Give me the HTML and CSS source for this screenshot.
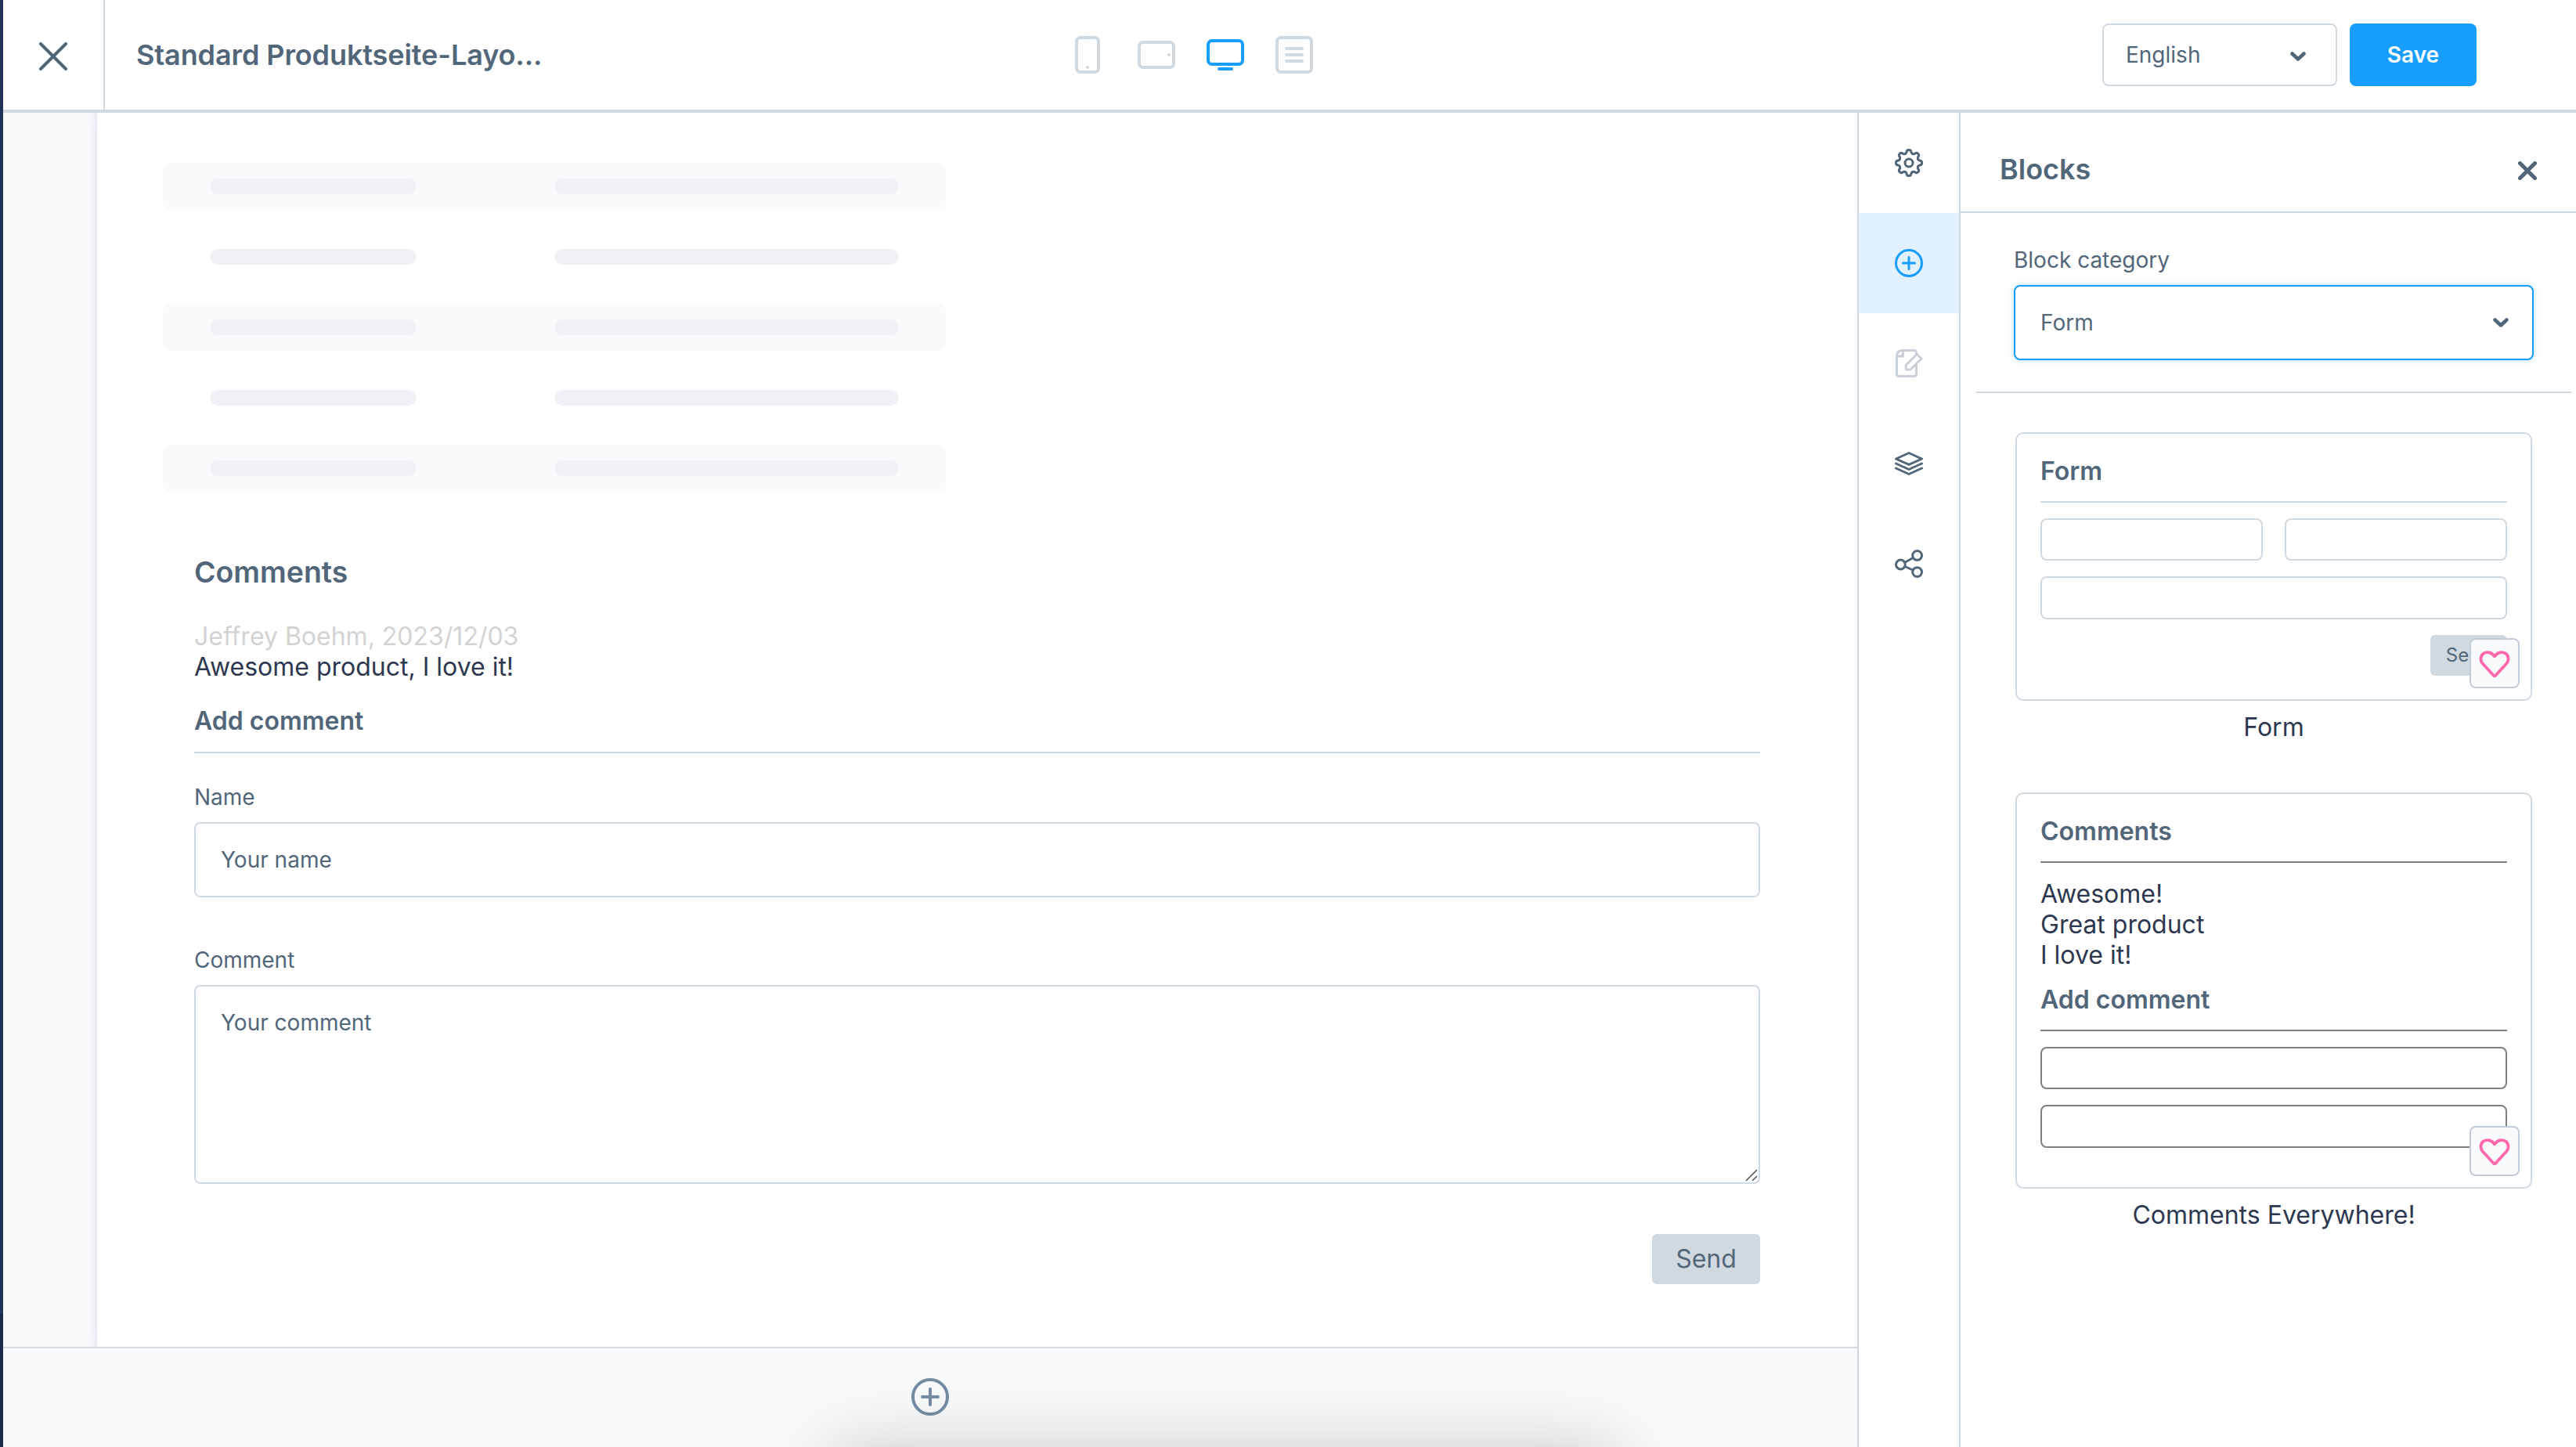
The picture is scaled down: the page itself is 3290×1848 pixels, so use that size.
FILE: index.html
```html
<!DOCTYPE html>
<html lang="en">
<head>
    <meta charset="UTF-8">
    <meta name="viewport" content="width=device-width, initial-scale=1.0">
    <title>Standard Produktseite-Layout</title>
    <link rel="stylesheet" href="styles.css">
</head>
<body>
    <div class="app">
        <div class="app-edge"></div>

        <div class="page">
            <header class="toolbar">
                <button class="toolbar-close" aria-label="Close">
                    <svg width="36" height="36" viewBox="0 0 36 36"><path d="M2 2l32 32M34 2L2 34"/></svg>
                </button>
                <h1 class="toolbar-title">Standard Produktseite-Layo...</h1>

                <div class="devices">
                    <svg width="48" height="48" viewBox="0 0 48 48">
                        <rect x="10" y="2" width="28" height="44" rx="5"/>
                        <circle class="dot" cx="24" cy="40" r="2"/>
                    </svg>
                    <svg width="48" height="48" viewBox="0 0 48 48">
                        <rect x="2" y="8" width="44" height="32" rx="5"/>
                        <circle class="dot" cx="40" cy="24" r="2"/>
                    </svg>
                    <svg class="active" width="48" height="48" viewBox="0 0 48 48">
                        <rect x="2" y="6" width="44" height="30" rx="5"/>
                        <path d="M16 42h16"/>
                    </svg>
                    <svg width="48" height="48" viewBox="0 0 48 48">
                        <rect x="2" y="2" width="44" height="44" rx="5"/>
                        <path d="M14 16h20M14 24h20M14 32h20"/>
                    </svg>
                </div>

                <div class="toolbar-actions">
                    <div class="select language">
                        <span>English</span>
                        <svg class="chevron" width="20" height="12" viewBox="0 0 20 12"><path d="M2.5 2.5L10 9.5l7.5-7"/></svg>
                    </div>
                    <button class="save-button">Save</button>
                </div>
            </header>

            <div class="workspace">
                <main class="stage">
                    <div class="stage-view">
                        <div class="canvas">
                            <div class="skeleton">
                                <div class="skeleton-row"><i></i><i></i></div>
                                <div class="skeleton-row"><i></i><i></i></div>
                                <div class="skeleton-row"><i></i><i></i></div>
                                <div class="skeleton-row"><i></i><i></i></div>
                                <div class="skeleton-row"><i></i><i></i></div>
                            </div>

                            <section class="comments">
                                <h3>Comments</h3>
                                <div class="comment">
                                    <div class="comment-meta">Jeffrey Boehm, 2023/12/03</div>
                                    <div>Awesome product, I love it!</div>
                                </div>
                                <h4>Add comment</h4>

                                <label for="name">Name</label>
                                <input id="name" type="text" placeholder="Your name">
                                <label for="comment">Comment</label>
                                <div class="textarea-wrap">
                                    <textarea id="comment" placeholder="Your comment"></textarea>
                                    <svg class="grip" width="16" height="16" viewBox="0 0 16 16"><path d="M1.5 14.5l13-13M9.5 14.5l5-5"/></svg>
                                </div>
                                <button class="send-button">Send</button>
                            </section>
                        </div>
                    </div>

                    <div class="add-section">
                        <svg width="48" height="48" viewBox="0 0 48 48"><circle cx="24" cy="24" r="22"/><path d="M24 14v20M14 24h20"/></svg>
                    </div>
                </main>

                <nav class="side-tabs">
                    <div class="tab">
                        <svg width="36" height="36" viewBox="-18 -18 36 36">
                            <circle r="5"/>
                            <path id="tooth" d="M-4.8-11.5C-3.4-12.1-3-12.6-2.9-13.8C-2.7-15.8-1.5-16.6 0-16.6S2.7-15.8 2.9-13.8C3-12.6 3.4-12.1 4.8-11.5"/>
                            <use href="#tooth" transform="rotate(45)"/>
                            <use href="#tooth" transform="rotate(90)"/>
                            <use href="#tooth" transform="rotate(135)"/>
                            <use href="#tooth" transform="rotate(180)"/>
                            <use href="#tooth" transform="rotate(225)"/>
                            <use href="#tooth" transform="rotate(270)"/>
                            <use href="#tooth" transform="rotate(315)"/>
                        </svg>
                    </div>
                    <div class="tab tab-active">
                        <svg width="36" height="36" viewBox="0 0 36 36"><circle cx="18" cy="18" r="16.5"/><path d="M18 10.5v15M10.5 18h15"/></svg>
                    </div>
                    <div class="tab tab-disabled">
                        <svg width="36" height="36" viewBox="0 0 36 36">
                            <path d="M27.5 7V4.5Q27.5 1.5 24.500 1.500H9.500Q2.500 2 2.500 9V31.500Q2.500 34.500 5.500 34.500H24.500Q27.500 34.500 27.500 31.500V20"/>
                            <path d="M3 9h7.300V2M28.300 6.300L34 12 20 26h-5.800v-5.800z"/>
                        </svg>
                    </div>
                    <div class="tab">
                        <svg width="36" height="36" viewBox="0 0 36 36">
                            <path d="M18 4.500L34.500 12 18 19.300 1.500 12zM1.500 18L18 25.500 34.500 18M1.500 24L18 31.500 34.500 24"/>
                        </svg>
                    </div>
                    <div class="tab">
                        <svg width="36" height="36" viewBox="0 0 36 36">
                            <circle cx="7.400" cy="19" r="5.900"/><circle cx="28.600" cy="7.400" r="5.900"/><circle cx="28.600" cy="28.600" r="5.900"/>
                            <path d="M13 16.200L23 10.500M13 21.500L23 26"/>
                        </svg>
                    </div>
                </nav>

                <aside class="panel">
                    <div class="panel-header">
                        <h2>Blocks</h2>
                        <svg class="panel-close" width="24" height="24" viewBox="0 0 24 24"><path d="M2.500 2.500l19 19M21.500 2.500l-19 19"/></svg>
                    </div>

                    <div class="category">
                        <div class="category-label">Block category</div>
                        <div class="select category-select">
                            <span>Form</span>
                            <svg class="chevron" width="20" height="12" viewBox="0 0 20 12"><path d="M2.500 2.500L10 9.500l7.500-7"/></svg>
                        </div>
                    </div>

                    <div class="blocks">
                        <div class="block">
                            <div class="card">
                                <h4>Form</h4>
                                <div class="card-row">
                                    <div class="field"></div>
                                    <div class="field"></div>
                                </div>
                                <div class="field field-last"></div>
                                <div class="card-send">Send</div>
                                <div class="favorite">
                                    <svg width="40" height="36" viewBox="0 0 40 36"><path d="M18.600 32.500L5 17.800C1.300 13.600 1.800 7.500 5.800 4.600C10.500 1.500 16.500 3.300 20 8.300C23.500 3.300 29.500 1.500 34.200 4.600C38.200 7.500 38.700 13.600 35 17.800L21.400 32.500Q20 33.800 18.600 32.500z"/></svg>
                                </div>
                            </div>
                            <div class="block-name">Form</div>
                        </div>

                        <div class="block">
                            <div class="card card-comments">
                                <h4>Comments</h4>
                                <div>Awesome!<br>Great product<br>I love it!</div>
                                <h4 class="card-subtitle">Add comment</h4>
                                <div class="field"></div>
                                <div class="field field-last"></div>
                                <div class="favorite">
                                    <svg width="40" height="36" viewBox="0 0 40 36"><path d="M18.600 32.500L5 17.800C1.300 13.600 1.800 7.500 5.800 4.600C10.500 1.500 16.500 3.300 20 8.300C23.500 3.300 29.500 1.500 34.200 4.600C38.200 7.500 38.700 13.600 35 17.800L21.400 32.500Q20 33.800 18.600 32.500z"/></svg>
                                </div>
                            </div>
                            <div class="block-name">Comments Everywhere!</div>
                        </div>
                    </div>
                </aside>
            </div>
        </div>

        <!-- shadow of the notification that waits below the window -->
        <div class="notification-shadow"></div>
    </div>
</body>
</html>
```

FILE: styles.css
```css
* {
    box-sizing: border-box;
    margin: 0;
    padding: 0;
}

body {
    font-family: Inter, "Liberation Sans", sans-serif;
    font-size: 32px;
    line-height: 39px;
    color: #2d3850;
    background: #fff;
}

button,
input,
textarea {
    font-family: inherit;
    border: none;
}

svg {
    display: block;
    flex-shrink: 0;
    fill: none;
    stroke: currentColor;
    stroke-linecap: round;
    stroke-linejoin: round;
}

h1,
h2,
h3,
h4 {
    font-weight: 600;
    color: #52667a;
}

.app {
    display: flex;
    width: 3290px;
    height: 1848px;
    overflow: hidden;
    position: relative;
}

.app-edge {
    width: 4px;
    background: linear-gradient(#22335a 0, #22335a 1678px, #1a294d 1678px);
}

.page {
    flex: 1;
    display: flex;
    flex-direction: column;
}

/* Toolbar */
.toolbar {
    height: 144px;
    display: flex;
    align-items: center;
    border-bottom: 4px solid #d1d9e0;
}

.toolbar-close {
    width: 130px;
    height: 140px;
    display: flex;
    align-items: center;
    padding: 4px 0 0 46px;
    background: none;
    border-right: 2px solid #d1d9e0;
    color: #52667a;
    stroke-width: 4;
}

.toolbar-title {
    width: 1231px;
    padding-left: 40px;
    font-size: 36px;
    line-height: 44px;
    letter-spacing: -0.1px;
}

.devices {
    display: flex;
    gap: 40px;
    color: #d1d9e0;
    stroke-width: 4;
}

.devices .active {
    color: #189eff;
}

.dot {
    fill: currentColor;
    stroke: none;
}

.toolbar-actions {
    display: flex;
    gap: 16px;
    margin-left: auto;
    margin-right: 127px;
}

.select {
    display: flex;
    align-items: center;
    justify-content: space-between;
    border: 2px solid #d1d9e0;
    border-radius: 8px;
    font-size: 28px;
    line-height: 34px;
    color: #52667a;
}

.chevron {
    stroke-width: 4.5;
}

.language {
    width: 300px;
    height: 80px;
    padding: 0 38px 0 28px;
}

.language .chevron {
    margin-top: 4px;
}

.save-button {
    width: 162px;
    height: 80px;
    border-radius: 8px;
    background: #189eff;
    color: #fff;
    font-size: 28px;
    line-height: 34px;
    font-weight: 600;
}

.workspace {
    flex: 1;
    display: flex;
    min-height: 0;
}

/* Stage */
.stage {
    width: 2368px;
    display: flex;
    flex-direction: column;
    background: #f9fafc;
}

.stage-view {
    height: 1576px;
    padding-left: 120px;
    overflow: hidden;
}

.canvas {
    height: 1576px;
    padding: 64px 124px 0 84px;
    background: #fff;
    box-shadow: 0 0 8px 2px rgba(190, 205, 217, .45), 0 0 24px rgba(0, 0, 0, .04);
}

.skeleton {
    width: 1000px;
    display: flex;
    flex-direction: column;
    gap: 30px;
}

.skeleton-row {
    display: grid;
    grid-template-columns: 264px 440px;
    gap: 176px;
    padding: 20px 60px;
    border-radius: 10px;
}

.skeleton-row:nth-child(odd) {
    background: #f9fafc;
}

.skeleton-row i {
    height: 20px;
    border-radius: 10px;
    background: #f0f1f5;
}

.comments {
    display: flex;
    flex-direction: column;
    padding: 80px 0 0 40px;
}

.comments h3 {
    font-size: 37.44px;
    line-height: 45px;
    margin-bottom: 40px;
}

.comment-meta {
    color: #d3d3d3;
}

.comments h4 {
    font-size: 32px;
    margin: 30px 0 39px;
    padding-bottom: 20px;
    border-bottom: 2px solid #d1d9e0;
}

.comments label {
    font-size: 28px;
    line-height: 34px;
    margin-bottom: 15px;
    color: #52667a;
}

.comments input,
.comments textarea {
    display: block;
    width: 100%;
    border: 2px solid #d1d9e0;
    border-radius: 8px;
    background: #fff;
    font-size: 28px;
    line-height: 34px;
}

.comments input {
    height: 96px;
    padding: 0 32px;
    margin-bottom: 63px;
}

.comments textarea {
    height: 254px;
    padding: 29px 32px;
    resize: none;
}

.comments ::placeholder {
    color: #52667a;
    opacity: 1;
}

.textarea-wrap {
    position: relative;
    margin-bottom: 64px;
}

.grip {
    position: absolute;
    right: 3px;
    bottom: 3px;
    color: #555;
    stroke-width: 1.6;
}

.send-button {
    align-self: flex-end;
    width: 138px;
    height: 64px;
    padding-bottom: 2px;
    border-radius: 6px;
    background: #d1d9e0;
    color: #52667a;
    font-size: 32px;
    line-height: 39px;
}

.add-section {
    flex: 1;
    display: flex;
    align-items: center;
    justify-content: center;
    padding-bottom: 2px;
    border-top: 2px solid #d1d9e0;
    color: #758ca3;
    stroke-width: 4;
}

/* Tabs between stage and panel */
.side-tabs {
    width: 132px;
    border: solid #d1d9e0;
    border-width: 0 2px;
    background: #fff;
}

.tab {
    height: 128px;
    display: flex;
    align-items: center;
    justify-content: center;
    color: #52667a;
    stroke-width: 3;
}

.tab-active {
    background: #e1f1ff;
    color: #189eff;
}

.tab-disabled {
    color: #c9d0d8;
}

/* Blocks panel */
.panel {
    flex: 1;
    background: #fff;
}

.panel-header {
    height: 128px;
    display: flex;
    align-items: center;
    justify-content: space-between;
    padding: 18px 50px 0;
    border-bottom: 2px solid #d1d9e0;
}

.panel-header h2 {
    font-size: 36px;
    line-height: 44px;
}

.panel-close {
    margin-top: 4px;
    color: #52667a;
    stroke-width: 5;
}

.category {
    height: 230px;
    margin: 0 6px 0 20px;
    padding: 43px 48px 0;
    border-bottom: 2px solid #d1d9e0;
}

.category-label {
    margin-bottom: 15px;
    font-size: 28px;
    line-height: 34px;
    color: #52667a;
}

.category-select {
    height: 96px;
    padding: 0 30px 0 32px;
    border-color: #189eff;
    box-shadow: 0 0 8px rgba(24, 158, 255, .3);
}

.blocks {
    display: flex;
    flex-direction: column;
    gap: 64px;
    padding: 50px 56px 0 70px;
}

.card {
    position: relative;
    display: flex;
    flex-direction: column;
    padding: 28px 30px 30px;
    border: 2px solid #d1d9e0;
    border-radius: 10px;
}

.card h4 {
    font-size: 32px;
    margin-bottom: 20px;
    padding-bottom: 19px;
    border-bottom: 2px solid #d1d9e0;
}

.card-row {
    display: grid;
    grid-template-columns: 1fr 1fr;
    gap: 28px;
}

.field {
    height: 54px;
    border: 2px solid #d1d9e0;
    border-radius: 8px;
}

.field-last {
    height: 55px;
    margin: 20px 0;
}

.card-send {
    align-self: flex-end;
    height: 52px;
    padding: 0 20px;
    border-radius: 6px;
    background: #d1d9e0;
    color: #52667a;
    font-size: 24px;
    line-height: 52px;
}

.card-comments h4,
.card-comments .field {
    border-color: #808080;
}

.card-comments .card-subtitle {
    margin-top: 18px;
}

.favorite {
    position: absolute;
    right: 14px;
    bottom: 14px;
    width: 64px;
    height: 64px;
    display: flex;
    align-items: center;
    justify-content: center;
    padding-top: 2px;
    border: 2px solid #c2ccd9;
    border-radius: 8px;
    background: #f9fafc;
    color: #ff68ac;
    stroke-width: 3.8;
}

.block-name {
    margin-top: 14px;
    text-align: center;
}

.notification-shadow {
    position: absolute;
    left: 1058px;
    top: 1848px;
    width: 1010px;
    height: 200px;
    border-radius: 20px;
    box-shadow: 0 0 90px rgba(0, 0, 0, .19);
}
```
